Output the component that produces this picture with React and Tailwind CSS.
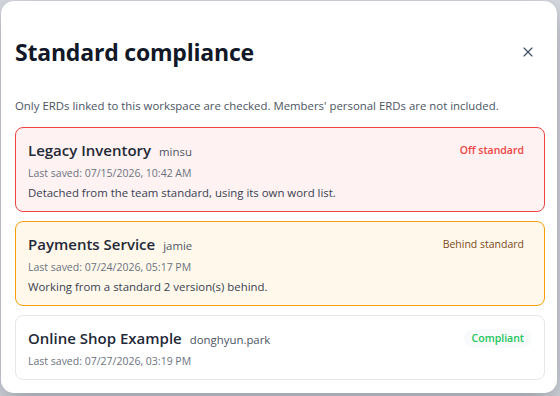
import { X } from "lucide-react";

const items = [
  {
    name: "Legacy Inventory",
    owner: "minsu",
    saved: "07/15/2026, 10:42 AM",
    note: "Detached from the team standard, using its own word list.",
    status: "Off standard",
    card: "border-[#ef4444] bg-[#fef2f2]",
    badge: "text-[#ef4444] font-semibold bg-[#fef2f2]",
  },
  {
    name: "Payments Service",
    owner: "jamie",
    saved: "07/24/2026, 05:17 PM",
    note: "Working from a standard 2 version(s) behind.",
    status: "Behind standard",
    card: "border-[#f59e0b] bg-[#fff8eb]",
    badge: "text-[#7a4a22] font-medium bg-[#fff8eb]",
  },
  {
    name: "Online Shop Example",
    owner: "donghyun.park",
    saved: "07/27/2026, 03:19 PM",
    status: "Compliant",
    card: "border-[#e5e7eb] bg-white",
    badge: "text-[#22c55e] font-semibold bg-[#f9fafb]",
  },
];

const ErdCard = ({ item }) => (
  <div className={`rounded-lg border px-3 pt-[11px] pb-[10px] ${item.card}`}>
    <div className="flex items-center justify-between h-[22px]">
      <div className="flex items-baseline gap-2">
        <span className="text-[15px] font-semibold text-[#1f2937]">{item.name}</span>
        <span className="text-[11.4px] text-[#4b5563]">{item.owner}</span>
      </div>
      <span className={`rounded-full px-2 py-[2px] text-[10.5px] leading-[15px] ${item.badge}`}>
        {item.status}
      </span>
    </div>
    <div className="mt-[4px] text-[10.5px] leading-[16px] text-[#6b7280]">Last saved: {item.saved}</div>
    {item.note && (
      <div className="mt-[3px] text-[11.4px] leading-[17px] text-[#374151]">{item.note}</div>
    )}
  </div>
);

export default function App() {
  return (
    <div
      className="w-[560px] h-[396px] bg-[#d9dbe1] p-px overflow-hidden"
      style={{ fontFamily: '"Open Sans", "Noto Sans", sans-serif' }}
    >
      <div className="w-[556px] h-[392px] rounded-[13px] bg-white shadow-[0_10px_30px_rgba(15,23,42,0.35)] pl-[14px] pr-[12px] pt-[35px] pb-[13px] flex flex-col">
        <div className="flex items-center justify-between h-[32px]">
          <h2 className="text-[23px] font-bold text-[#111827] tracking-[-0.2px]">Standard compliance</h2>
          <button className="mr-[9px] text-[#475569]">
            <X size={16} strokeWidth={1.75} />
          </button>
        </div>
        <p className="mt-[30px] text-[11.4px] leading-[16px] text-[#4b5563]">
          Only ERDs linked to this workspace are checked. Members' personal ERDs are not included.
        </p>
        <div className="mt-[13px] flex flex-col gap-[9px]">
          {items.map((item) => (
            <ErdCard key={item.name} item={item} />
          ))}
        </div>
      </div>
    </div>
  );
}
